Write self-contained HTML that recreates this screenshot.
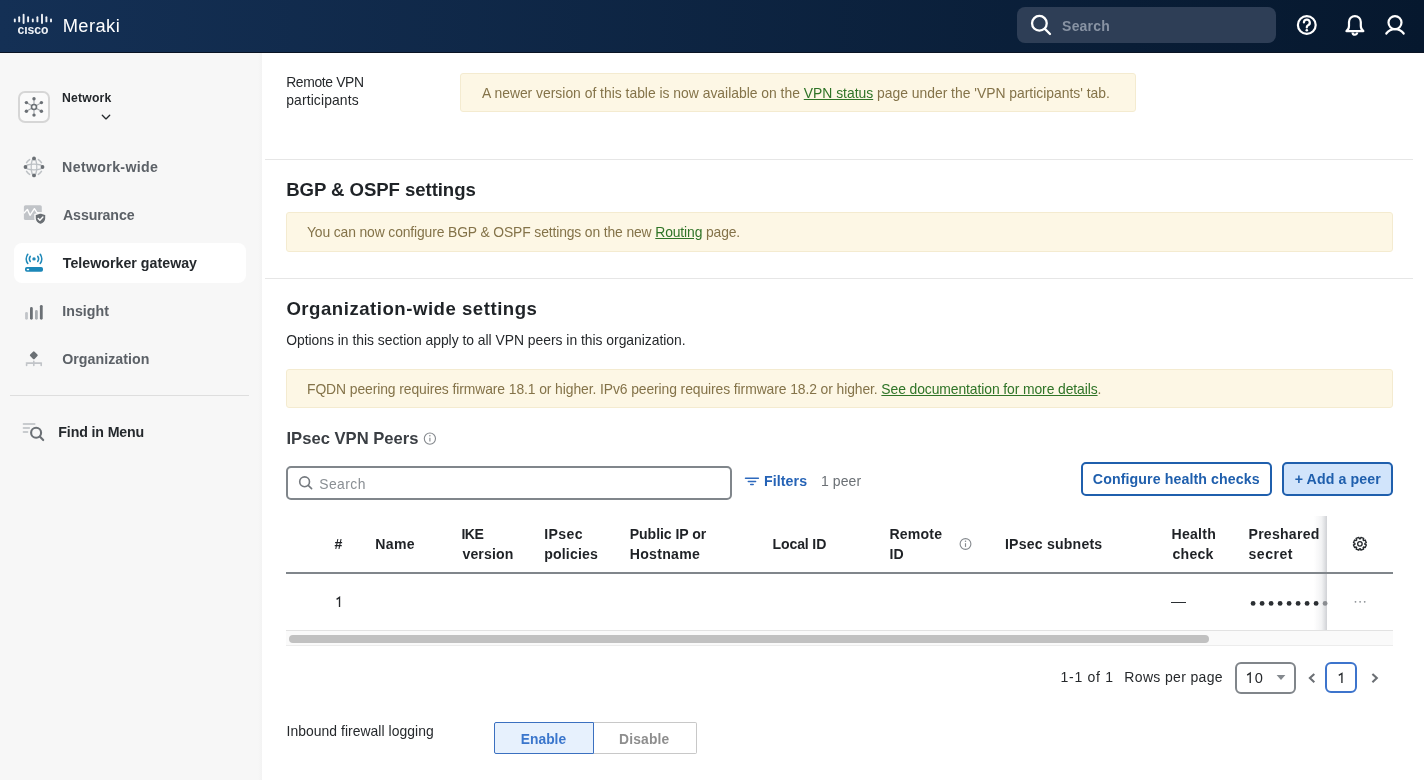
<!DOCTYPE html>
<html><head><meta charset="utf-8"><style>*{box-sizing:border-box;margin:0;padding:0}
html,body{width:1424px;height:780px;overflow:hidden;background:#fff;font-family:"Liberation Sans",sans-serif;color:#2b2f33}
.a{position:absolute}
.t{position:absolute;white-space:nowrap}
.t a{text-decoration:underline;text-underline-offset:1px}
svg{position:absolute;overflow:visible}
</style></head><body><div style="position:absolute;left:0;top:0;width:1424px;height:780px;will-change:transform">
<div class="a" style="left:0;top:0;width:1424px;height:52px;background:linear-gradient(90deg,#143055 0%,#06182e 100%)"></div>
<div class="a" style="left:0;top:52px;width:1424px;height:1px;background:#0a1424"></div>
<svg style="left:0;top:0" width="60" height="53" viewBox="0 0 60 53"><g stroke="#eef1f6" stroke-width="1.9" stroke-linecap="round">
<line x1="14.8" y1="19.4" x2="14.8" y2="21.4"/><line x1="19.2" y1="17.3" x2="19.2" y2="21.4"/><line x1="23.6" y1="14.8" x2="23.6" y2="23.1"/>
<line x1="28.1" y1="17.3" x2="28.1" y2="21.4"/><line x1="32.8" y1="19.4" x2="32.8" y2="21.4"/><line x1="37.4" y1="17.3" x2="37.4" y2="21.4"/>
<line x1="42" y1="14.8" x2="42" y2="23.1"/><line x1="46.4" y1="17.3" x2="46.4" y2="21.4"/><line x1="51" y1="19.4" x2="51" y2="21.4"/></g>
<text x="32.9" y="33.7" text-anchor="middle" font-family="Liberation Sans" font-weight="bold" font-size="12.2" fill="#eef1f6" letter-spacing="-0.05">c&#305;sco</text></svg>
<div class="t" style="left:62.70px;top:14.00px;font-size:18.3px;line-height:23px;color:#ffffff;letter-spacing:0.44px">Meraki</div>
<div class="a" style="left:1017px;top:7px;width:259px;height:36px;border-radius:8px;background:#2e3e56"></div>
<svg style="left:0;top:0" width="1" height="1"><circle cx="1039.4" cy="23.3" r="7.35" fill="none" stroke="#fff" stroke-width="2.3"/><line x1="1044.9" y1="28.9" x2="1050" y2="34" stroke="#fff" stroke-width="2.3" stroke-linecap="round"/></svg>
<div class="t" style="left:1062.10px;top:16.70px;font-size:14px;line-height:18px;color:#8893a3;font-weight:700;letter-spacing:0.2px">Search</div>
<svg style="left:0;top:0" width="1" height="1"><circle cx="1306.8" cy="25" r="8.9" fill="none" stroke="#fff" stroke-width="2.2"/><path d="M1303.9 22.5a2.95 2.95 0 1 1 4.2 2.7c-.8.4-1.3 1-1.3 1.8v.4" fill="none" stroke="#fff" stroke-width="2.2" stroke-linecap="round"/><circle cx="1306.8" cy="30.3" r="1.3" fill="#fff"/></svg>
<svg style="left:0;top:0" width="1" height="1"><path d="M1346.4 31.1h17c-1.6-1.2-2.6-3-2.6-5.2v-3.9a5.9 5.9 0 0 0-11.8 0v3.9c0 2.2-1 4-2.6 5.2z" fill="none" stroke="#fff" stroke-width="2.2" stroke-linejoin="round"/><path d="M1352.6 32.4a2.3 2.3 0 0 0 4.6 0" fill="none" stroke="#fff" stroke-width="2.2"/></svg>
<svg style="left:0;top:0" width="1" height="1"><circle cx="1395" cy="22.6" r="6.5" fill="none" stroke="#fff" stroke-width="2.2"/><path d="M1386.3 33.5a10.8 10.8 0 0 1 17.4 0" fill="none" stroke="#fff" stroke-width="2.2" stroke-linecap="round"/></svg>
<div class="a" style="left:0;top:53px;width:262px;height:727px;background:#f7f7f7"></div>
<div class="a" style="left:258px;top:53px;width:4px;height:727px;background:linear-gradient(90deg,#f7f7f7,#f3f3f3)"></div>
<div class="a" style="left:18.2px;top:91.1px;width:31.6px;height:31.6px;border:2px solid #d6d6d6;border-radius:7px;background:#fafafa"></div>
<svg style="left:0;top:0" width="1" height="1">
<g stroke="#a3a7ab" stroke-width="1.1"><path d="M34 107V98.7M34 107V115.1M34 107 26.4 102.6M34 107 41.4 102.6M34 107 26.4 111.2M34 107 41.4 111.2"/></g>
<g fill="#6b7075"><circle cx="34" cy="98.7" r="1.7"/><circle cx="34" cy="115.1" r="1.7"/><circle cx="26.4" cy="102.6" r="1.7"/><circle cx="41.4" cy="102.6" r="1.7"/><circle cx="26.4" cy="111.2" r="1.7"/><circle cx="41.4" cy="111.2" r="1.7"/></g>
<circle cx="34" cy="107" r="2.5" fill="#fafafa" stroke="#6b7075" stroke-width="1.6"/></svg>
<div class="t" style="left:62.10px;top:91.00px;font-size:12.2px;line-height:15px;color:#23272b;font-weight:700;letter-spacing:0.167px">Network</div>
<svg style="left:0;top:0" width="1" height="1"><path d="M102.3 115.3 106 118.9 109.7 115.3" fill="none" stroke="#25292d" stroke-width="1.35" stroke-linecap="round" stroke-linejoin="round"/></svg>
<svg style="left:0;top:0" width="1" height="1"><g fill="none" stroke="#bcc0c4" stroke-width="1.2">
<ellipse cx="34" cy="167" rx="2.8" ry="8.4"/><ellipse cx="34" cy="167" rx="8.4" ry="2.8"/>
<path d="M26.6 162.6A8.6 8.6 0 0 1 29.6 159.6M38.4 159.6A8.6 8.6 0 0 1 41.4 162.6M41.4 171.4A8.6 8.6 0 0 1 38.4 174.4M29.6 174.4A8.6 8.6 0 0 1 26.6 171.4" stroke-width="1.6" stroke-linecap="round"/></g>
<g fill="#6b7075"><circle cx="34" cy="158.5" r="1.9"/><circle cx="34" cy="175.4" r="1.9"/><circle cx="25.5" cy="167" r="1.9"/><circle cx="42.5" cy="167" r="1.9"/></g></svg>
<div class="t" style="left:62.10px;top:158.00px;font-size:14.2px;line-height:18px;color:#5c6167;font-weight:700;letter-spacing:0.327px">Network-wide</div>
<svg style="left:0;top:0" width="1" height="1"><rect x="23.9" y="205.2" width="17.9" height="14.8" rx="1.6" fill="#c1c4c8"/>
<path d="M23.9 213.2 27.4 209.4 30 215.3 34.4 208.7 37 212.6 41.8 212.6" fill="none" stroke="#fff" stroke-width="1.4" stroke-linejoin="round"/>
<path d="M40.5 212.8 35 214.6v3.6c0 3.2 2.3 5.4 5.5 6.6 3.2-1.2 5.5-3.4 5.5-6.6v-3.6z" fill="#6b7075" stroke="#f7f7f7" stroke-width="1.6"/>
<path d="M38.2 218.6 39.9 220.3 42.9 217.1" fill="none" stroke="#fff" stroke-width="1.4" stroke-linecap="round" stroke-linejoin="round"/></svg>
<div class="t" style="left:63.00px;top:206.00px;font-size:14.2px;line-height:18px;color:#5c6167;font-weight:700;letter-spacing:-0.125px">Assurance</div>
<div class="a" style="left:13.5px;top:242.6px;width:232.6px;height:40.1px;border-radius:8px;background:#fff"></div>
<svg style="left:0;top:0" width="1" height="1"><g fill="none" stroke="#1f89b9" stroke-width="1.5" stroke-linecap="round">
<path d="M27.8 254.3A8 8 0 0 0 27.8 263.5"/><path d="M40.2 254.3A8 8 0 0 1 40.2 263.5"/>
<path d="M30.3 256.3A4.4 4.4 0 0 0 30.3 261.5"/><path d="M37.7 256.3A4.4 4.4 0 0 1 37.7 261.5"/></g>
<circle cx="34" cy="258.9" r="1.7" fill="#1f89b9"/><rect x="25" y="267" width="18" height="4.8" rx="1.8" fill="#1b87b8"/><rect x="26.8" y="268.8" width="2.3" height="1.4" fill="#fff"/></svg>
<div class="t" style="left:62.80px;top:253.70px;font-size:14.2px;line-height:18px;color:#25292d;font-weight:700;letter-spacing:0.024px">Teleworker gateway</div>
<svg style="left:0;top:0" width="1" height="1"><g stroke-width="2.8" stroke-linecap="round">
<line x1="26.5" y1="313.3" x2="26.5" y2="318.3" stroke="#c1c4c8"/><line x1="31.4" y1="308.4" x2="31.4" y2="318.3" stroke="#6b7075"/>
<line x1="36.4" y1="311.5" x2="36.4" y2="318.3" stroke="#a8acb0"/><line x1="41.3" y1="306.3" x2="41.3" y2="318.3" stroke="#6b7075"/></g></svg>
<div class="t" style="left:62.20px;top:301.80px;font-size:14.2px;line-height:18px;color:#5c6167;font-weight:700;letter-spacing:0.05px">Insight</div>
<svg style="left:0;top:0" width="1" height="1"><rect x="30.7" y="352.2" width="6.2" height="6.2" rx="1.1" transform="rotate(45 33.8 355.3)" fill="#6b7075"/>
<path d="M26.4 363.1H41.4M26.6 363.1V365.4M33.8 361.4V365.4M41.2 363.1V365.4" fill="none" stroke="#c1c4c8" stroke-width="1.6" stroke-linecap="round"/></svg>
<div class="t" style="left:62.20px;top:349.80px;font-size:14.2px;line-height:18px;color:#5c6167;font-weight:700;letter-spacing:0.045px">Organization</div>
<div class="a" style="left:10px;top:395px;width:239px;height:1px;background:#dedede"></div>
<svg style="left:0;top:0" width="1" height="1"><g stroke="#b9bdc1" stroke-width="1.5" stroke-linecap="round"><path d="M23.4 424H34.8M23.4 427.9H29.4M23.4 432H27.6"/></g>
<circle cx="36.1" cy="432.8" r="5" fill="none" stroke="#6b7075" stroke-width="2.1"/><line x1="39.8" y1="436.6" x2="43.2" y2="440.1" stroke="#6b7075" stroke-width="2.1" stroke-linecap="round"/></svg>
<div class="t" style="left:58.30px;top:422.80px;font-size:14.2px;line-height:18px;color:#25292d;font-weight:700;letter-spacing:-0.136px">Find in Menu</div>
<div class="t" style="left:286.20px;top:73.90px;font-size:13.9px;line-height:17px;color:#26292c;letter-spacing:-0.356px">Remote VPN</div>
<div class="t" style="left:286.20px;top:91.80px;font-size:13.9px;line-height:17px;color:#26292c;letter-spacing:0.127px">participants</div>
<div class="a" style="left:460px;top:73px;width:676px;height:39px;background:#fdf7e5;border:1px solid #f4ebd0;border-radius:3px"></div>
<div class="t" style="left:482.10px;top:84.70px;font-size:13.9px;line-height:17px;color:#847349;letter-spacing:-0.006px">A newer version of this table is now available on the <a style="color:#2f7427">VPN status</a> page under the 'VPN participants' tab.</div>
<div class="a" style="left:265px;top:159px;width:1148px;height:1px;background:#e6e6e6"></div>
<div class="t" style="left:286.20px;top:178.00px;font-size:18.6px;line-height:23px;color:#1f2327;font-weight:700;letter-spacing:-0.067px">BGP &amp; OSPF settings</div>
<div class="a" style="left:286px;top:212px;width:1107px;height:40px;background:#fdf7e5;border:1px solid #f4ebd0;border-radius:3px"></div>
<div class="t" style="left:307.00px;top:223.80px;font-size:13.9px;line-height:17px;color:#847349;letter-spacing:-0.131px">You can now configure BGP &amp; OSPF settings on the new <a style="color:#2f7427">Routing</a> page.</div>
<div class="a" style="left:265px;top:278px;width:1148px;height:1px;background:#e6e6e6"></div>
<div class="t" style="left:286.40px;top:296.70px;font-size:18.6px;line-height:23px;color:#1f2327;font-weight:700;letter-spacing:0.516px">Organization-wide settings</div>
<div class="t" style="left:286.20px;top:331.70px;font-size:13.9px;line-height:17px;color:#26292c;letter-spacing:-0.019px">Options in this section apply to all VPN peers in this organization.</div>
<div class="a" style="left:286px;top:369px;width:1107px;height:39px;background:#fdf7e5;border:1px solid #f4ebd0;border-radius:3px"></div>
<div class="t" style="left:307.00px;top:381.00px;font-size:13.9px;line-height:17px;color:#847349;letter-spacing:-0.091px">FQDN peering requires firmware 18.1 or higher. IPv6 peering requires firmware 18.2 or higher. <a style="color:#2f7427">See documentation for more details</a>.</div>
<div class="t" style="left:286.50px;top:428.00px;font-size:16.6px;line-height:21px;color:#3a3e43;font-weight:700;letter-spacing:0.007px">IPsec VPN Peers</div>
<svg style="left:0;top:0" width="1" height="1"><circle cx="429.9" cy="438.6" r="5.6" fill="none" stroke="#85898e" stroke-width="1.1"/><circle cx="429.9" cy="435.8" r=".75" fill="#85898e"/><path d="M429.9 437.8v3.8" stroke="#85898e" stroke-width="1.15"/></svg>
<div class="a" style="left:286px;top:466px;width:446px;height:34px;border:2px solid #80868b;border-radius:5px"></div>
<svg style="left:0;top:0" width="1" height="1"><circle cx="304.6" cy="481.8" r="4.9" fill="none" stroke="#74797e" stroke-width="1.6"/><line x1="308.2" y1="485.4" x2="311.6" y2="488.6" stroke="#74797e" stroke-width="1.6" stroke-linecap="round"/></svg>
<div class="t" style="left:319.20px;top:475.70px;font-size:13.9px;line-height:17px;color:#8a8f94;letter-spacing:0.46px">Search</div>
<svg style="left:0;top:0" width="1" height="1"><path d="M745.5 478.2H758.4M748.3 481.4H755.6M750.7 484.4H753.2" stroke="#2d69bd" stroke-width="1.5" stroke-linecap="round"/></svg>
<div class="t" style="left:764.00px;top:471.80px;font-size:14.2px;line-height:18px;color:#2563b6;font-weight:700;letter-spacing:0.083px">Filters</div>
<div class="t" style="left:821.00px;top:471.80px;font-size:14px;line-height:18px;color:#6b7075;letter-spacing:0.08px">1 peer</div>
<div class="a" style="left:1081px;top:462px;width:191px;height:34px;border:2px solid #1f5fad;border-radius:5px;background:#fff"></div>
<div class="t" style="left:1092.80px;top:470.20px;font-size:14.2px;line-height:18px;color:#1f5fad;font-weight:700;letter-spacing:0.095px">Configure health checks</div>
<div class="a" style="left:1282px;top:462px;width:111px;height:34px;border:2px solid #1f5fad;border-radius:5px;background:#d1e4fb"></div>
<div class="t" style="left:1294.70px;top:470.20px;font-size:14.2px;line-height:18px;color:#1f5fad;font-weight:700;letter-spacing:0.1px">+ Add a peer</div>
<div class="a" style="left:1314px;top:516px;width:13px;height:114px;background:linear-gradient(90deg,rgba(215,217,221,0) 0%,rgba(215,217,221,.35) 60%,rgba(205,207,211,.95) 100%)"></div>
<div class="a" style="left:286px;top:572px;width:1107px;height:2px;background:#80868b"></div>
<div class="t" style="left:334.60px;top:534.60px;font-size:14.1px;line-height:18px;color:#1f2226;font-weight:700">#</div>
<div class="t" style="left:375.30px;top:534.60px;font-size:14.1px;line-height:18px;color:#1f2226;font-weight:700;letter-spacing:0.333px">Name</div>
<div class="t" style="left:461.40px;top:524.80px;font-size:14.1px;line-height:18px;color:#1f2226;font-weight:700;letter-spacing:-0.45px">IKE</div>
<div class="t" style="left:462.40px;top:544.70px;font-size:14.1px;line-height:18px;color:#1f2226;font-weight:700;letter-spacing:0.15px">version</div>
<div class="t" style="left:544.30px;top:524.80px;font-size:14.1px;line-height:18px;color:#1f2226;font-weight:700;letter-spacing:0.375px">IPsec</div>
<div class="t" style="left:544.30px;top:544.70px;font-size:14.1px;line-height:18px;color:#1f2226;font-weight:700;letter-spacing:0.143px">policies</div>
<div class="t" style="left:629.70px;top:524.80px;font-size:14.1px;line-height:18px;color:#1f2226;font-weight:700;letter-spacing:-0.055px">Public IP or</div>
<div class="t" style="left:629.70px;top:544.70px;font-size:14.1px;line-height:18px;color:#1f2226;font-weight:700;letter-spacing:0.3px">Hostname</div>
<div class="t" style="left:772.50px;top:534.60px;font-size:14.1px;line-height:18px;color:#1f2226;font-weight:700;letter-spacing:-0.143px">Local ID</div>
<div class="t" style="left:889.40px;top:524.80px;font-size:14.1px;line-height:18px;color:#1f2226;font-weight:700;letter-spacing:0.2px">Remote</div>
<div class="t" style="left:889.40px;top:544.70px;font-size:14.1px;line-height:18px;color:#1f2226;font-weight:700;letter-spacing:0.2px">ID</div>
<svg style="left:0;top:0" width="1" height="1"><circle cx="965.5" cy="544" r="5.4" fill="none" stroke="#85898e" stroke-width="1.1"/><circle cx="965.5" cy="541.3" r=".75" fill="#85898e"/><path d="M965.5 543.2v3.7" stroke="#85898e" stroke-width="1.15"/></svg>
<div class="t" style="left:1005.00px;top:534.60px;font-size:14.1px;line-height:18px;color:#1f2226;font-weight:700;letter-spacing:0.2px">IPsec subnets</div>
<div class="t" style="left:1171.50px;top:524.80px;font-size:14.1px;line-height:18px;color:#1f2226;font-weight:700;letter-spacing:0.25px">Health</div>
<div class="t" style="left:1172.50px;top:544.70px;font-size:14.1px;line-height:18px;color:#1f2226;font-weight:700;letter-spacing:0.25px">check</div>
<div class="t" style="left:1248.50px;top:524.80px;font-size:14.1px;line-height:18px;color:#1f2226;font-weight:700;letter-spacing:0.238px">Preshared</div>
<div class="t" style="left:1248.50px;top:544.70px;font-size:14.1px;line-height:18px;color:#1f2226;font-weight:700;letter-spacing:0.48px">secret</div>
<svg style="left:0;top:0" width="1" height="1"><path d="M1360.39 538.82 L1360.99 537.38 L1363.67 538.49 L1363.07 539.93 A5.0 5.0 0 0 1 1363.77 540.63 L1365.21 540.03 L1366.32 542.71 L1364.88 543.31 A5.0 5.0 0 0 1 1364.88 544.29 L1366.32 544.89 L1365.21 547.57 L1363.77 546.97 A5.0 5.0 0 0 1 1363.07 547.67 L1363.67 549.11 L1360.99 550.22 L1360.39 548.78 A5.0 5.0 0 0 1 1359.41 548.78 L1358.81 550.22 L1356.13 549.11 L1356.73 547.67 A5.0 5.0 0 0 1 1356.03 546.97 L1354.59 547.57 L1353.48 544.89 L1354.92 544.29 A5.0 5.0 0 0 1 1354.92 543.31 L1353.48 542.71 L1354.59 540.03 L1356.03 540.63 A5.0 5.0 0 0 1 1356.73 539.93 L1356.13 538.49 L1358.81 537.38 L1359.41 538.82 A5.0 5.0 0 0 1 1360.39 538.82Z" fill="none" stroke="#25292d" stroke-width="1.35" stroke-linejoin="round"/><circle cx="1359.9" cy="543.8" r="2.25" fill="none" stroke="#25292d" stroke-width="1.35"/></svg>
<svg style="left:0;top:0" width="1" height="1"><path d="M339.52 606.90V597.38L336.57 599.35" fill="none" stroke="#26292c" stroke-width="1.35" stroke-linejoin="miter" stroke-linecap="butt"/></svg>
<div class="a" style="left:1171px;top:601.6px;width:14.6px;height:1.5px;background:#2b2f33"></div>
<svg style="left:0;top:0" width="1" height="1"><circle cx="1253.1" cy="603.4" r="2.4" fill="#2b2f33"/><circle cx="1262.1" cy="603.4" r="2.4" fill="#2b2f33"/><circle cx="1271.1" cy="603.4" r="2.4" fill="#2b2f33"/><circle cx="1280.1" cy="603.4" r="2.4" fill="#2b2f33"/><circle cx="1289.1" cy="603.4" r="2.4" fill="#2b2f33"/><circle cx="1298.1" cy="603.4" r="2.4" fill="#2b2f33"/><circle cx="1307.1" cy="603.4" r="2.4" fill="#2b2f33"/><circle cx="1316.1" cy="603.4" r="2.4" fill="#2b2f33"/><circle cx="1325.1" cy="603.4" r="2.4" fill="#8a8d91"/></svg>
<svg style="left:0;top:0" width="1" height="1"><g fill="#8a8f94"><circle cx="1355.5" cy="601.8" r=".9"/><circle cx="1360.1" cy="601.8" r=".9"/><circle cx="1364.7" cy="601.8" r=".9"/></g></svg>
<div class="a" style="left:286px;top:630px;width:1107px;height:1px;background:#e2e2e2"></div>
<div class="a" style="left:286px;top:631px;width:1107px;height:14px;background:#fafafa"></div>
<div class="a" style="left:286px;top:645px;width:1107px;height:1px;background:#ececec"></div>
<div class="a" style="left:289px;top:634.8px;width:920px;height:8px;border-radius:4px;background:#c1c1c1"></div>
<div class="t" style="left:1060.60px;top:667.90px;font-size:14px;line-height:18px;color:#26292c;letter-spacing:0.7px">1-1 of 1</div>
<div class="t" style="left:1124.30px;top:667.90px;font-size:14px;line-height:18px;color:#26292c;letter-spacing:0.342px">Rows per page</div>
<div class="a" style="left:1235.4px;top:661.5px;width:61.1px;height:32.8px;border:2px solid #80858a;border-radius:6px"></div>
<svg style="left:0;top:0" width="1" height="1"><path d="M1250.23 682.90V673.07L1247.17 675.13" fill="none" stroke="#26292c" stroke-width="1.35" stroke-linejoin="miter" stroke-linecap="butt"/></svg>
<div class="t" style="left:1254.70px;top:668.90px;font-size:14.6px;line-height:18px;color:#26292c">0</div>
<svg style="left:0;top:0" width="1" height="1"><path d="M1276.6 675.1H1285.4L1281 680Z" fill="#84898e"/></svg>
<svg style="left:0;top:0" width="1" height="1"><path d="M1314.3 674 1309.9 678.1 1314.3 682.2" fill="none" stroke="#6b6f74" stroke-width="2.1" stroke-linecap="butt" stroke-linejoin="miter"/><path d="M1372.4 674 1376.8 678.1 1372.4 682.2" fill="none" stroke="#6b6f74" stroke-width="2.1" stroke-linecap="butt" stroke-linejoin="miter"/></svg>
<div class="a" style="left:1325.3px;top:662.3px;width:31.4px;height:30.9px;border:2px solid #3d74cc;border-radius:6px"></div>
<svg style="left:0;top:0" width="1" height="1"><path d="M1341.92 683.10V673.38L1338.77 675.40" fill="none" stroke="#25292d" stroke-width="1.35" stroke-linejoin="miter" stroke-linecap="butt"/></svg>
<div class="t" style="left:286.50px;top:723.00px;font-size:13.9px;line-height:17px;color:#26292c;letter-spacing:0.052px">Inbound firewall logging</div>
<div class="a" style="left:494.3px;top:722px;width:100px;height:32.4px;border:1px solid #3b70c0;background:#e7f1fd;border-radius:2px 0 0 2px"></div>
<div class="a" style="left:594px;top:722px;width:102.7px;height:32.4px;border:1px solid #c8c8c8;border-left:none;border-radius:0 2px 2px 0"></div>
<div class="t" style="left:520.80px;top:731.00px;font-size:13.8px;line-height:17px;color:#3a76cc;font-weight:700;letter-spacing:0.02px">Enable</div>
<div class="t" style="left:619.00px;top:731.00px;font-size:13.8px;line-height:17px;color:#8e8e8e;font-weight:700;letter-spacing:0.183px">Disable</div>
</div></body></html>
